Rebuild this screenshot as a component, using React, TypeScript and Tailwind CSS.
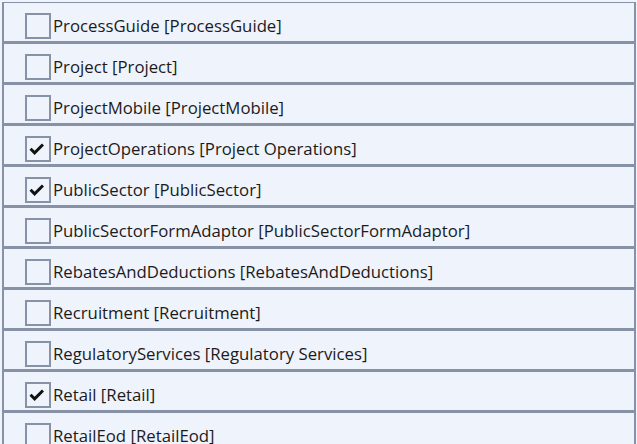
import React from "react";

const items: { label: string; checked: boolean }[] = [
  { label: "ProcessGuide [ProcessGuide]", checked: false },
  { label: "Project [Project]", checked: false },
  { label: "ProjectMobile [ProjectMobile]", checked: false },
  { label: "ProjectOperations [Project Operations]", checked: true },
  { label: "PublicSector [PublicSector]", checked: true },
  { label: "PublicSectorFormAdaptor [PublicSectorFormAdaptor]", checked: false },
  { label: "RebatesAndDeductions [RebatesAndDeductions]", checked: false },
  { label: "Recruitment [Recruitment]", checked: false },
  { label: "RegulatoryServices [Regulatory Services]", checked: false },
  { label: "Retail [Retail]", checked: true },
  { label: "RetailEod [RetailEod]", checked: false },
];

function Check() {
  return (
    <svg width="16" height="13" viewBox="0 0 16 13">
      <path d="M0.5 6.8 L2.6 4.7 L5.6 7.8 L12.9 0.5 L15 2.6 L5.6 12 Z" fill="#111" />
    </svg>
  );
}

export default function App() {
  return (
    <div className="w-[637px] h-[444px] overflow-hidden bg-[#eff3fc] pl-[2px] pt-[2px] pr-[1px]">
      <div
        className="border-l-2 border-r-2 border-t border-[#8792a7] flex flex-col"
        style={{ fontFamily: '"Open Sans", "Noto Sans", sans-serif' }}
      >
        {items.map((it) => (
          <div
            key={it.label}
            className="h-[41px] shrink-0 border-b-[3px] border-[#8792a7] flex items-start pt-[10px] pl-[21px]"
          >
            <div className="w-[26px] h-[26px] border-2 border-[#8792a7] flex items-center justify-start pl-[2px] pt-[1px]">
              {it.checked && <Check />}
            </div>
            <span className="ml-[2px] text-[16.75px] text-[#1b1b1b] leading-[26px] whitespace-nowrap">
              {it.label}
            </span>
          </div>
        ))}
      </div>
    </div>
  );
}
